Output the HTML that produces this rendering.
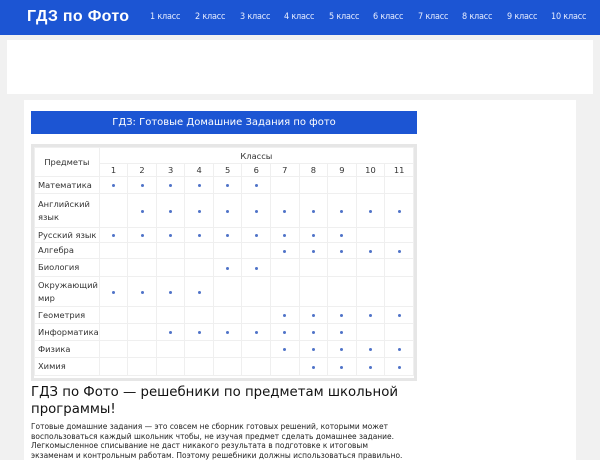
<!DOCTYPE html>
<html><head><meta charset="utf-8"><style>
*{margin:0;padding:0;box-sizing:border-box}
body{width:600px;height:450px;overflow:hidden;background:#f1f1f1;font-family:"DejaVu Sans","Liberation Sans",sans-serif;color:#222}
.hdr{height:35px;background:#1c55d3;position:relative}
.logo{position:absolute;left:27px;top:8px;color:#fff;font:bold 16px "Liberation Sans",sans-serif;letter-spacing:0.3px}
.nav a{position:absolute;top:12px;color:#e8eeff;font:9px "DejaVu Sans Condensed","Liberation Sans Narrow",sans-serif;text-decoration:none;white-space:nowrap;letter-spacing:-0.2px}
.ad{position:absolute;left:7px;top:40px;width:586px;height:54px;background:#fff}
.main{position:absolute;left:24px;top:100px;width:552px;height:360px;background:#fff}
.title{position:absolute;left:7px;top:11px;width:386px;height:23px;background:#1c55d3;color:#fff;font-size:10px;text-align:center;line-height:23px}
.tb{position:absolute;left:7px;top:44px;width:386px;height:237px;border:3px solid #e6e6e6;background:#fff}
table{border-collapse:collapse;font-size:8.3px;color:#333}
td{border:1px solid #efefef;text-align:center;padding:0}
td.s{text-align:left;padding-left:3px;width:63px;line-height:13px}
td.c{width:28.8px}
.d::after{content:"";display:inline-block;width:3px;height:3px;border-radius:50%;background:#5073c8;vertical-align:middle}
h2{position:absolute;left:7px;top:284px;width:420px;font-weight:normal;font-size:13.3px;line-height:17px;color:#111}
p{position:absolute;left:7px;top:322px;width:380px;font:8.3px/9.5px "DejaVu Sans Condensed","DejaVu Sans",sans-serif;color:#222}
</style></head><body>
<div class="hdr"><div class="logo">ГДЗ по Фото</div>
<div class="nav"><a style="left:150px">1 класс</a><a style="left:195px">2 класс</a><a style="left:240px">3 класс</a><a style="left:284px">4 класс</a><a style="left:329px">5 класс</a><a style="left:373px">6 класс</a><a style="left:418px">7 класс</a><a style="left:462px">8 класс</a><a style="left:507px">9 класс</a><a style="left:551px">10 класс</a></div></div>
<div class="ad"></div>
<div class="main">
<div class="title">ГДЗ: Готовые Домашние Задания по фото</div>
<div class="tb"><table>
<tr style="height:16px"><td class="s" rowspan="2" style="text-align:center;padding:0">Предметы</td><td colspan="11">Классы</td></tr>
<tr style="height:13px"><td class="c">1</td><td class="c">2</td><td class="c">3</td><td class="c">4</td><td class="c">5</td><td class="c">6</td><td class="c">7</td><td class="c">8</td><td class="c">9</td><td class="c">10</td><td class="c">11</td></tr>
<tr style="height:17px"><td class="s">Математика</td><td class="d"></td><td class="d"></td><td class="d"></td><td class="d"></td><td class="d"></td><td class="d"></td><td></td><td></td><td></td><td></td><td></td></tr>
<tr style="height:34px"><td class="s">Английский язык</td><td></td><td class="d"></td><td class="d"></td><td class="d"></td><td class="d"></td><td class="d"></td><td class="d"></td><td class="d"></td><td class="d"></td><td class="d"></td><td class="d"></td></tr>
<tr style="height:15px"><td class="s">Русский язык</td><td class="d"></td><td class="d"></td><td class="d"></td><td class="d"></td><td class="d"></td><td class="d"></td><td class="d"></td><td class="d"></td><td class="d"></td><td></td><td></td></tr>
<tr style="height:16px"><td class="s">Алгебра</td><td></td><td></td><td></td><td></td><td></td><td></td><td class="d"></td><td class="d"></td><td class="d"></td><td class="d"></td><td class="d"></td></tr>
<tr style="height:18px"><td class="s">Биология</td><td></td><td></td><td></td><td></td><td class="d"></td><td class="d"></td><td></td><td></td><td></td><td></td><td></td></tr>
<tr style="height:30px"><td class="s">Окружающий мир</td><td class="d"></td><td class="d"></td><td class="d"></td><td class="d"></td><td></td><td></td><td></td><td></td><td></td><td></td><td></td></tr>
<tr style="height:17px"><td class="s">Геометрия</td><td></td><td></td><td></td><td></td><td></td><td></td><td class="d"></td><td class="d"></td><td class="d"></td><td class="d"></td><td class="d"></td></tr>
<tr style="height:17px"><td class="s">Информатика</td><td></td><td></td><td class="d"></td><td class="d"></td><td class="d"></td><td class="d"></td><td class="d"></td><td class="d"></td><td class="d"></td><td></td><td></td></tr>
<tr style="height:17px"><td class="s">Физика</td><td></td><td></td><td></td><td></td><td></td><td></td><td class="d"></td><td class="d"></td><td class="d"></td><td class="d"></td><td class="d"></td></tr>
<tr style="height:18px"><td class="s">Химия</td><td></td><td></td><td></td><td></td><td></td><td></td><td></td><td class="d"></td><td class="d"></td><td class="d"></td><td class="d"></td></tr>
</table></div>
<h2>ГДЗ по Фото — решебники по предметам школьной программы!</h2>
<p>Готовые домашние задания — это совсем не сборник готовых решений, которыми может воспользоваться каждый школьник чтобы, не изучая предмет сделать домашнее задание. Легкомысленное списывание не даст никакого результата в подготовке к итоговым экзаменам и контрольным работам. Поэтому решебники должны использоваться правильно.</p>
</div>
</body></html>
